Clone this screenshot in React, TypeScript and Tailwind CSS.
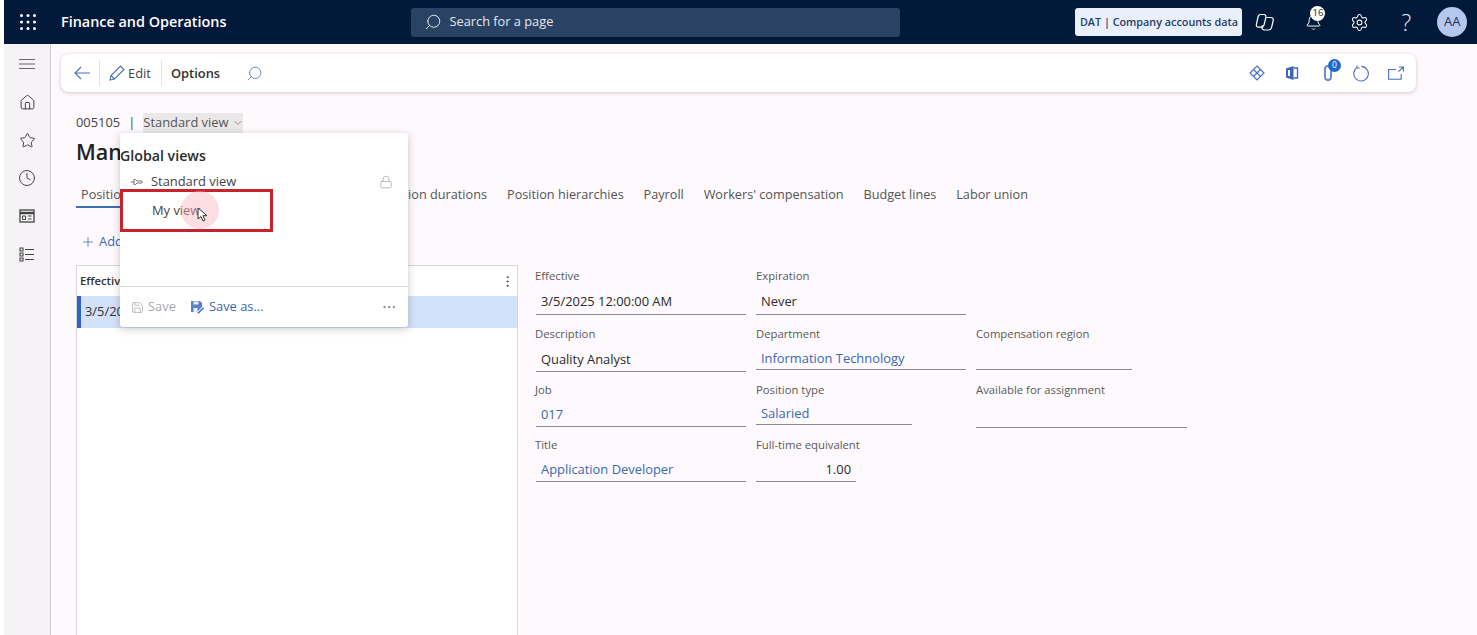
import React from "react";
import { Search, Home, Star, Clock, Settings, Bell, Lock, Plus, Save, MoreVertical, MoreHorizontal, ChevronDown } from "lucide-react";

function Field({ label, value, link, box, right, inset }: { label: string; value?: string; link?: boolean; box: string; right?: boolean; inset?: boolean }) {
  return (
    <div>
      <div className="h-[16px] text-[11.3px] leading-[16px] text-[#5a5a5a]">{label}</div>
      <div className={`${box} flex items-center border-b-[1.5px] border-[#8a8a8a] pt-[6px] text-[12.9px] ${inset ? "ml-[1px] pl-[5px]" : "pl-[5px]"} ${right ? "justify-end pr-[5px]" : ""} ${link ? "text-[#3a68b0]" : "text-[#2b2b2b]"}`}>{value}</div>
    </div>
  );
}

function Tab({ children }: { children: React.ReactNode }) {
  return <span className="whitespace-nowrap">{children}</span>;
}

function NavSlot({ children }: { children: React.ReactNode }) {
  return <div className="flex h-[38px] w-full items-center justify-center">{children}</div>;
}

export default function App() {
  return (
    <div className="flex h-[635px] w-[1477px] flex-col overflow-hidden bg-white pl-[4px] font-['Open_Sans',sans-serif]">
      <header className="flex h-[44px] shrink-0 items-center bg-[#03193a] text-white">
        <svg width="16" height="16" viewBox="0 0 16 16" fill="#fff" className="ml-[16px]">
          {[1.5, 8, 14.5].flatMap((y) => [1.5, 8, 14.5].map((x) => <circle key={`${x}-${y}`} cx={x} cy={y} r="1.5" />))}
        </svg>
        <div className="ml-[25px] text-[14.4px] font-semibold">Finance and Operations</div>
        <div className="ml-[185px] flex h-[29px] w-[489px] items-center rounded-[3px] bg-[#2a4263] pl-[13px] text-[12.8px] text-[#e4e8ef]">
          <Search size={18} className="-scale-x-100" strokeWidth={1.3} />
          <span className="ml-[7px]">Search for a page</span>
        </div>
        <div className="ml-[175px] flex h-[28px] w-[167px] items-center justify-center rounded-[3px] bg-[#e9effb] text-[10.8px] font-semibold whitespace-nowrap text-[#24406a]">DAT | Company accounts data</div>
        <svg width="20" height="19" viewBox="0 0 20 19" fill="none" stroke="#fff" strokeWidth="1.2" className="ml-[13px]">
          <path d="M5.5 1.5h3.2c1.6 0 2.6 1.3 2.2 2.8L9 12c-.4 1.4-1.6 2.2-3 2.2H3.6c-1.6 0-2.6-1.4-2.2-2.9L3 4C3.3 2.5 4.2 1.5 5.5 1.5Z" />
          <path d="M11.5 4.5h4.3c1.7 0 2.8 1.4 2.4 3l-1.6 6.8c-.4 1.6-1.6 2.7-3.3 2.7H9.6c-1.8 0-2.9-1.4-2.5-3.1l.4-1.6" />
        </svg>
        <div className="relative ml-[28px] flex h-[20px] w-[20px] items-center justify-center">
          <Bell size={17} strokeWidth={1.4} />
          <span className="absolute -top-[6px] left-[7px] flex h-[15px] w-[15px] items-center justify-center rounded-full bg-white text-[9.5px] text-[#1d1d1d]">16</span>
        </div>
        <Settings size={19} strokeWidth={1.3} className="ml-[27px]" />
        <span className="ml-[32px] text-[23px] leading-none font-light text-[#e8e8e8]">?</span>
        <div className="ml-[26px] flex h-[30px] w-[30px] items-center justify-center rounded-full bg-[#b5c7ef] text-[13px] text-[#24324d]">AA</div>
      </header>

      <div className="flex min-h-0 flex-1">
        <aside className="flex w-[47px] shrink-0 flex-col items-center border-r border-[#cfcdcf] bg-[#f6f3f6] pt-[1px] text-[#444]">
          <NavSlot>
            <svg width="16" height="12" viewBox="0 0 16 12" stroke="#666" strokeWidth="1.2"><path d="M0 1.5h16M0 6h16M0 10.5h16" /></svg>
          </NavSlot>
          <NavSlot><Home size={17} strokeWidth={1.4} /></NavSlot>
          <NavSlot><Star size={17} strokeWidth={1.4} /></NavSlot>
          <NavSlot><Clock size={18} strokeWidth={1.3} /></NavSlot>
          <NavSlot>
            <svg width="16" height="14" viewBox="0 0 16 14" fill="none" stroke="#444" strokeWidth="1.3">
              <rect x="1" y="1" width="14" height="12" />
              <path d="M1 4h14" strokeWidth="2.4" />
              <path d="M3.5 7h3v3.5h-3zM9 7h3.5M9 10h3.5" strokeWidth="1" />
            </svg>
          </NavSlot>
          <NavSlot>
            <svg width="16" height="15" viewBox="0 0 16 15" fill="none" stroke="#444" strokeWidth="1.1">
              <path d="M1 1h3v3H1zM1 6h3v3H1zM1 11h3v3H1zM6 2.5h9M6 7.5h9M6 12.5h9" />
            </svg>
          </NavSlot>
        </aside>

        <main className="relative min-w-0 flex-1 bg-[#fdf9fc]">
          <div className="mt-[10px] ml-[10px] flex h-[38px] w-[1355px] items-center rounded-[8px] bg-white pr-[12px] pl-[13px] shadow-[0_1px_4px_rgba(0,0,0,0.2)]">
            <svg width="16" height="14" viewBox="0 0 16 14" fill="none" stroke="#4a6fc0" strokeWidth="1.1"><path d="M16 7H1M7 1 1 7l6 6" /></svg>
            <div className="ml-[9px] h-[26px] w-px bg-[#e4e2e4]" />
            <svg width="16" height="16" viewBox="0 0 16 16" fill="none" stroke="#4a6fc0" strokeWidth="1.1" className="ml-[9px]"><path d="M1 15l1-4.5L11.5 1 15 4.5 5.5 14Z M2 10.5 5.5 14" /></svg>
            <span className="ml-[3px] pt-[2px] text-[12.9px] text-[#444]">Edit</span>
            <div className="ml-[10px] h-[26px] w-px bg-[#e4e2e4]" />
            <span className="ml-[9px] pt-[2px] text-[12.9px] font-semibold text-[#333]">Options</span>
            <Search size={17} strokeWidth={1.1} className="ml-[26px] -scale-x-100 text-[#4a6fc0]" />
            <div className="flex-1" />
            <svg width="16" height="16" viewBox="0 0 16 16" fill="none" stroke="#4a6fc0" strokeWidth="1.2">
              <path d="M8 1 15 8 8 15 1 8ZM4.5 4.5 11.5 11.5M11.5 4.5 4.5 11.5" />
            </svg>
            <svg width="14" height="16" viewBox="0 0 14 16" fill="none" className="ml-[20px]">
              <path d="M1 3.5 8.5 1v14L1 12.5Z" fill="#3f66b8" />
              <path d="M8.5 3h4v10h-4" stroke="#3f66b8" strokeWidth="1.3" />
              <path d="M4 5v6" stroke="#fff" strokeWidth="2" />
            </svg>
            <div className="relative ml-[24px] h-[16px] w-[10px]">
              <svg width="10" height="16" viewBox="0 0 10 16" fill="none" stroke="#6b8ccb" strokeWidth="2">
                <path d="M2 4v8a3 3 0 0 0 6 0V4a3 3 0 0 0-6 0Z" />
              </svg>
              <span className="absolute -top-[6px] left-[5px] flex h-[13px] w-[13px] items-center justify-center rounded-full bg-[#1f66d0] text-[8.5px] text-white">0</span>
            </div>
            <svg width="17" height="17" viewBox="0 0 17 17" fill="none" stroke="#4a6fc0" strokeWidth="1.1" className="ml-[19px]">
              <path d="M5 2.6A7.3 7.3 0 1 0 9.5 1.4M5 .6V3h2.6" />
            </svg>
            <svg width="16" height="14" viewBox="0 0 16 14" fill="none" stroke="#4a6fc0" strokeWidth="1.1" className="ml-[19px]">
              <path d="M8 3.5H.6v9.8h12.6V8M11 1h4.4v4.4M15.4 1l-5 4.6" />
            </svg>
          </div>

          <div className="mt-[21px] ml-[25px] flex h-[20px] items-center text-[12.9px] text-[#444]">
            <span>005105</span>
            <span className="mx-[8px]">|</span>
            <span className="flex h-[20px] w-[100px] items-center gap-[3px] bg-[#ebe8ea] whitespace-nowrap text-[#555]">
              Standard view <ChevronDown size={14} strokeWidth={1.2} />
            </span>
          </div>
          <h1 className="mt-[4px] ml-[25px] text-[21.5px] leading-[30px] font-semibold text-[#222]">Manage positions</h1>

          <div className="mt-[18px] ml-[25px] flex h-[28px] w-[952px] pl-[5px] text-[12.7px] text-[#555]">
            <div className="flex w-[406px] justify-between">
              <Tab>Position details</Tab>
              <Tab>Worker assignments</Tab>
              <Tab>Position durations</Tab>
            </div>
            <div className="ml-[20px] flex w-[521px] justify-between">
              <Tab>Position hierarchies</Tab>
              <Tab>Payroll</Tab>
              <Tab>Workers' compensation</Tab>
              <Tab>Budget lines</Tab>
              <Tab>Labor union</Tab>
            </div>
          </div>
          <div className="-mt-[7px] ml-[25px] h-[2px] w-[60px] bg-[#3f6fb5]" />

          <div className="mt-[24px] ml-[29px] flex h-[20px] items-center gap-[3px] text-[12.9px] text-[#3a68b0]">
            <Plus size={16} strokeWidth={1.1} /> Add
          </div>

          <div className="mt-[13px] ml-[25px] flex">
            <div className="h-[400px] w-[442px] shrink-0 border border-[#d8d6d8] bg-white">
              <div className="flex h-[30px] items-center justify-between pr-[2px] pl-[3px] text-[11.3px] font-semibold text-[#333]">
                Effective
                <MoreVertical size={15} strokeWidth={1.6} className="text-[#555]" />
              </div>
              <div className="flex h-[32px] items-center border-l-[4px] border-[#2f62c9] bg-[#d3e2f9] pl-[4px] text-[12.9px] text-[#333]">3/5/2025</div>
            </div>

            <div className="ml-[17px] grid grid-cols-[221px_220px_220px] grid-rows-[58px_56px_55px_50px] pt-[3px]">
              <Field inset label="Effective" value="3/5/2025 12:00:00 AM" box="h-[31px] w-[210px]" />
              <Field label="Expiration" value="Never" box="h-[31px] w-[210px]" />
              <div />
              <Field inset label="Description" value="Quality Analyst" box="h-[30px] w-[210px]" />
              <Field label="Department" value="Information Technology" link box="h-[28px] w-[210px]" />
              <Field label="Compensation region" box="h-[28px] w-[156px]" />
              <Field inset label="Job" value="017" link box="h-[29px] w-[210px]" />
              <Field label="Position type" value="Salaried" link box="h-[27px] w-[156px]" />
              <Field label="Available for assignment" box="h-[30px] w-[211px]" />
              <Field inset label="Title" value="Application Developer" link box="h-[29px] w-[210px]" />
              <Field label="Full-time equivalent" value="1.00" right box="h-[29px] w-[100px]" />
              <div />
            </div>
          </div>

          <div className="absolute top-[89px] left-[69px] flex h-[194px] w-[288px] flex-col rounded-[3px] bg-white shadow-[0_2px_8px_rgba(0,0,0,0.22)]">
            <div className="mt-[13px] text-[14.2px] leading-[20px] font-semibold text-[#2b2b2b]">Global views</div>
            <div className="mt-[6px] flex h-[20px] items-center pr-[15px] pl-[11px] text-[12.9px] text-[#444]">
              <svg width="12" height="8" viewBox="0 0 12 8" fill="none" stroke="#666" strokeWidth="0.9">
                <path d="M0 4h3M3 1.5h1.5L6 3h5v2H6L4.5 6.5H3Z" />
              </svg>
              <span className="ml-[8px]">Standard view</span>
              <Lock size={14} strokeWidth={1.1} className="ml-auto text-[#999]" />
            </div>
            <div className="mt-[8px] h-[20px] pl-[32px] text-[12.9px] leading-[20px] text-[#444]">My view</div>
            <div className="flex-1" />
            <div className="flex h-[41px] items-center border-t border-[#d6d4d6] pr-[11px] pl-[11px] text-[12.9px]">
              <Save size={13} strokeWidth={1.4} className="text-[#aaa]" />
              <span className="ml-[4px] text-[#a8a8a8]">Save</span>
              <svg width="15" height="14" viewBox="0 0 15 14" className="ml-[14px]">
                <path d="M1 1h9l2 2v4l-4 4-1 1H1Z" fill="#5b82c6" />
                <path d="M3.5 1.5h5v3h-5zM3.5 8h4v4h-4z" fill="#e6edf9" />
                <path d="M7.5 12.5 13 7l1.3 1.3-5.5 5.5H7.5Z" fill="#3f6fb5" stroke="#fff" strokeWidth="0.5" />
              </svg>
              <span className="ml-[4px] text-[#3a68b0]">Save as...</span>
              <MoreHorizontal size={16} strokeWidth={1.1} className="ml-auto text-[#666]" />
            </div>
          </div>

          <div className="absolute top-[145px] left-[69px] h-[43px] w-[153px] border-[3px] border-[#c8232c]" />
          <div className="absolute top-[147px] left-[130px] h-[38px] w-[38px] rounded-full bg-[#f8b4bc]/45" />
          <svg width="12" height="16" viewBox="0 0 12 16" className="absolute top-[163px] left-[146px]" fill="#fff" stroke="#333" strokeWidth="1">
            <path d="M1 1v11l3-2.5 2 4.5 2-1-2-4.3h4Z" />
          </svg>
        </main>
      </div>
    </div>
  );
}
